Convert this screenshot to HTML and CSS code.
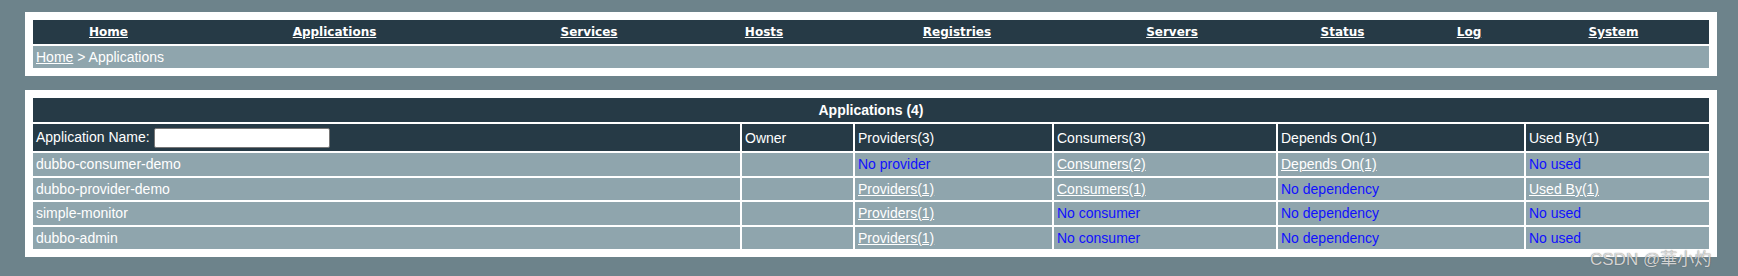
FILE: index.html
```html
<!DOCTYPE html>
<html lang="en">
<head>
<meta charset="utf-8">
<title>Applications</title>
<link rel="stylesheet" href="styles.css">
</head>
<body>
<div class="panel panel-top">
  <table class="nav">
    <tr>
      <td class="n-home"><a href="#">Home</a></td>
      <td class="n-apps"><a href="#">Applications</a></td>
      <td class="n-svc"><a href="#">Services</a></td>
      <td class="n-hosts"><a href="#">Hosts</a></td>
      <td class="n-reg"><a href="#">Registries</a></td>
      <td class="n-srv"><a href="#">Servers</a></td>
      <td class="n-status"><a href="#">Status</a></td>
      <td class="n-log"><a href="#">Log</a></td>
      <td><a href="#">System</a></td>
    </tr>
  </table>
  <div class="crumb"><a href="#">Home</a> &gt; Applications</div>
</div>
<div class="panel panel-list">
  <table class="list">
    <colgroup>
      <col class="c-name"><col class="c-owner"><col class="c-prov"><col class="c-cons"><col class="c-dep"><col>
    </colgroup>
    <tr><th colspan="6" class="title">Applications (4)</th></tr>
    <tr class="head">
      <td>Application Name: <input class="filter" type="text"></td>
      <td>Owner</td>
      <td>Providers(3)</td>
      <td>Consumers(3)</td>
      <td>Depends On(1)</td>
      <td>Used By(1)</td>
    </tr>
    <tr class="row">
      <td>dubbo-consumer-demo</td>
      <td></td>
      <td><span class="none">No provider</span></td>
      <td><a href="#">Consumers(2)</a></td>
      <td><a href="#">Depends On(1)</a></td>
      <td><span class="none">No used</span></td>
    </tr>
    <tr class="row">
      <td>dubbo-provider-demo</td>
      <td></td>
      <td><a href="#">Providers(1)</a></td>
      <td><a href="#">Consumers(1)</a></td>
      <td><span class="none">No dependency</span></td>
      <td><a href="#">Used By(1)</a></td>
    </tr>
    <tr class="row">
      <td>simple-monitor</td>
      <td></td>
      <td><a href="#">Providers(1)</a></td>
      <td><span class="none">No consumer</span></td>
      <td><span class="none">No dependency</span></td>
      <td><span class="none">No used</span></td>
    </tr>
    <tr class="row">
      <td>dubbo-admin</td>
      <td></td>
      <td><a href="#">Providers(1)</a></td>
      <td><span class="none">No consumer</span></td>
      <td><span class="none">No dependency</span></td>
      <td><span class="none">No used</span></td>
    </tr>
  </table>
</div>
<div class="watermark">CSDN @華小灼</div>
</body>
</html>
```
FILE: styles.css
```css
html, body {
  margin: 0;
  padding: 0;
}
body {
  background: #6d838b;
  padding: 12px 21px 0 25px;
  height: 276px;
  box-sizing: border-box;
  font-family: "Liberation Sans", Arial, sans-serif;
  font-size: 14px;
  color: #fff;
  position: relative;
  overflow: hidden;
}
a {
  color: #fff;
}
.panel {
  background: #fff;
}
.panel-top {
  padding: 8px;
}
.panel-list {
  margin-top: 14px;
  padding: 6px;
}
.nav {
  width: 100%;
  border-collapse: collapse;
  table-layout: fixed;
  background: #263a46;
}
.nav td {
  height: 24px;
  padding: 0;
  text-align: center;
  font-family: "DejaVu Sans", Verdana, sans-serif;
  font-weight: bold;
  font-size: 12px;
}
.n-home { width: 151px; }
.n-apps { width: 301px; }
.n-svc { width: 208px; }
.n-hosts { width: 142px; }
.n-reg { width: 244px; }
.n-srv { width: 186px; }
.n-status { width: 155px; }
.n-log { width: 98px; }
.crumb {
  margin-top: 2px;
  height: 22px;
  line-height: 22px;
  padding-left: 3px;
  background: #8fa5ad;
}
.list {
  width: 100%;
  border-collapse: separate;
  border-spacing: 2px;
  table-layout: fixed;
}
.c-name { width: 707px; }
.c-owner { width: 111px; }
.c-prov { width: 197px; }
.c-cons { width: 222px; }
.c-dep { width: 246px; }
.list th, .list td {
  box-sizing: border-box;
  text-align: left;
  font-weight: normal;
  padding: 0 3px;
  white-space: nowrap;
  overflow: hidden;
}
.list .title {
  height: 24px;
  background: #263a46;
  text-align: center;
  font-weight: bold;
}
.head td {
  height: 27px;
  background: #263a46;
}
.row td {
  height: 22.5px;
  background: #8fa5ad;
}
.filter {
  box-sizing: border-box;
  width: 176px;
  height: 20px;
  margin: 0;
  padding: 1px 2px;
  border: 1px solid #767676;
  border-radius: 2px;
  background: #fff;
  vertical-align: middle;
  font: 13px "Liberation Sans", Arial, sans-serif;
}
.none {
  color: #1010ff;
}
.watermark {
  position: absolute;
  left: 1590px;
  top: 245px;
  font-family: "Liberation Sans", "Noto Sans CJK SC", sans-serif;
  font-size: 17px;
  color: rgba(235, 235, 235, 0.85);
  text-shadow: 0 0 1px rgba(60, 60, 60, 0.8);
  white-space: nowrap;
}
```
